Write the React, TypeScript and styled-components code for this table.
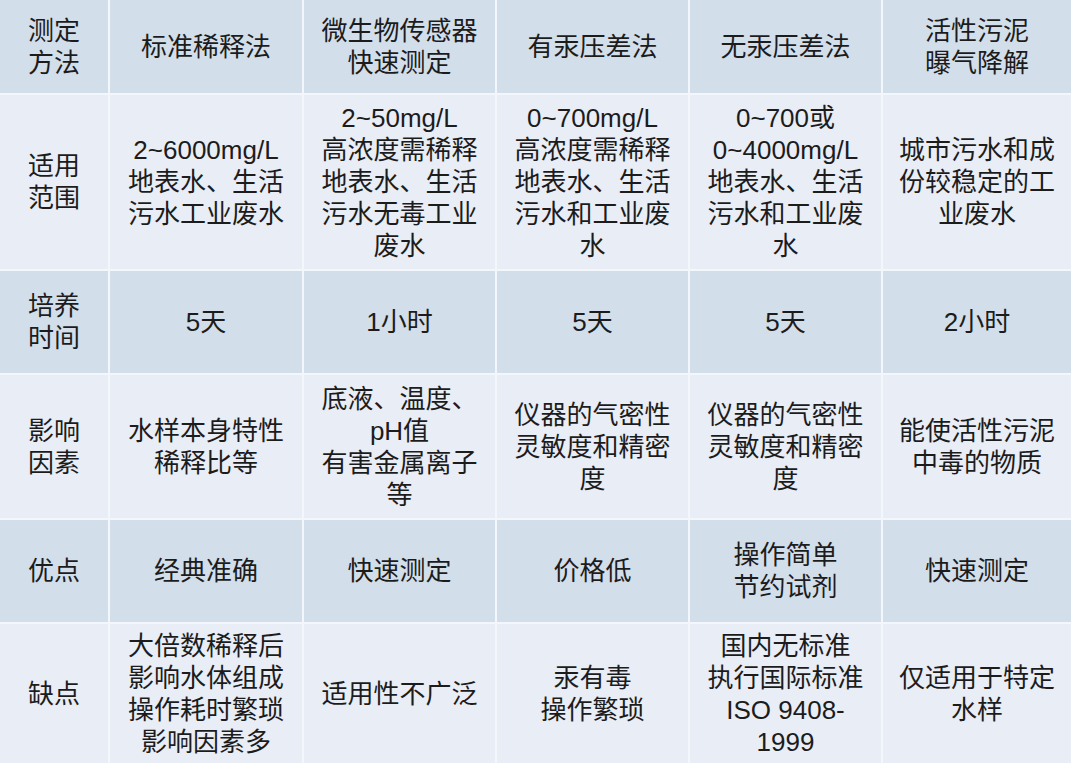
import { FC } from "react";
import styled, { createGlobalStyle } from "styled-components";

const GlobalStyle = createGlobalStyle`
  html, body {
    margin: 0;
    padding: 0;
    background: #f3f6fa;
  }
`;

const Table = styled.div`
  display: grid;
  grid-template-columns: 108px 192px 191px 191px 191px 188px;
  grid-template-rows: 93px 174px 102px 143px 102px 139px;
  gap: 2px;
  width: 1071px;
  height: 763px;
  background: #f3f6fa;
  font-family: "Liberation Sans", "Noto Sans CJK SC", sans-serif;
  color: #1c1c1c;
`;

const Cell = styled.div<{ $dark: boolean }>`
  display: flex;
  flex-direction: column;
  align-items: center;
  justify-content: center;
  text-align: center;
  background: ${(p) => (p.$dark ? "#d3deeb" : "#e9edf6")};
  font-size: 26px;
  line-height: 32px;
  overflow: hidden;
`;

const Line = styled.span`
  display: block;
  height: 32px;
  white-space: nowrap;
`;

type Row = string[][];

const rows: Row[] = [
  [["测定", "方法"], ["标准稀释法"], ["微生物传感器", "快速测定"], ["有汞压差法"], ["无汞压差法"], ["活性污泥", "曝气降解"]],
  [
    ["适用", "范围"],
    ["2~6000mg/L", "地表水、生活", "污水工业废水"],
    ["2~50mg/L", "高浓度需稀释", "地表水、生活", "污水无毒工业", "废水"],
    ["0~700mg/L", "高浓度需稀释", "地表水、生活", "污水和工业废", "水"],
    ["0~700或", "0~4000mg/L", "地表水、生活", "污水和工业废", "水"],
    ["城市污水和成", "份较稳定的工", "业废水"],
  ],
  [["培养", "时间"], ["5天"], ["1小时"], ["5天"], ["5天"], ["2小时"]],
  [
    ["影响", "因素"],
    ["水样本身特性", "稀释比等"],
    ["底液、温度、", "pH值", "有害金属离子", "等"],
    ["仪器的气密性", "灵敏度和精密", "度"],
    ["仪器的气密性", "灵敏度和精密", "度"],
    ["能使活性污泥", "中毒的物质"],
  ],
  [["优点"], ["经典准确"], ["快速测定"], ["价格低"], ["操作简单", "节约试剂"], ["快速测定"]],
  [
    ["缺点"],
    ["大倍数稀释后", "影响水体组成", "操作耗时繁琐", "影响因素多"],
    ["适用性不广泛"],
    ["汞有毒", "操作繁琐"],
    ["国内无标准", "执行国际标准", "ISO 9408-", "1999"],
    ["仅适用于特定", "水样"],
  ],
];

const App: FC = () => {
  return (
    <>
      <GlobalStyle />
      <Table>
        {rows.map((row, r) =>
          row.map((cell, c) => (
            <Cell key={`${r}-${c}`} $dark={r % 2 === 0}>
              {cell.map((line, i) => (
                <Line key={i}>{line}</Line>
              ))}
            </Cell>
          ))
        )}
      </Table>
    </>
  );
};

export default App;
